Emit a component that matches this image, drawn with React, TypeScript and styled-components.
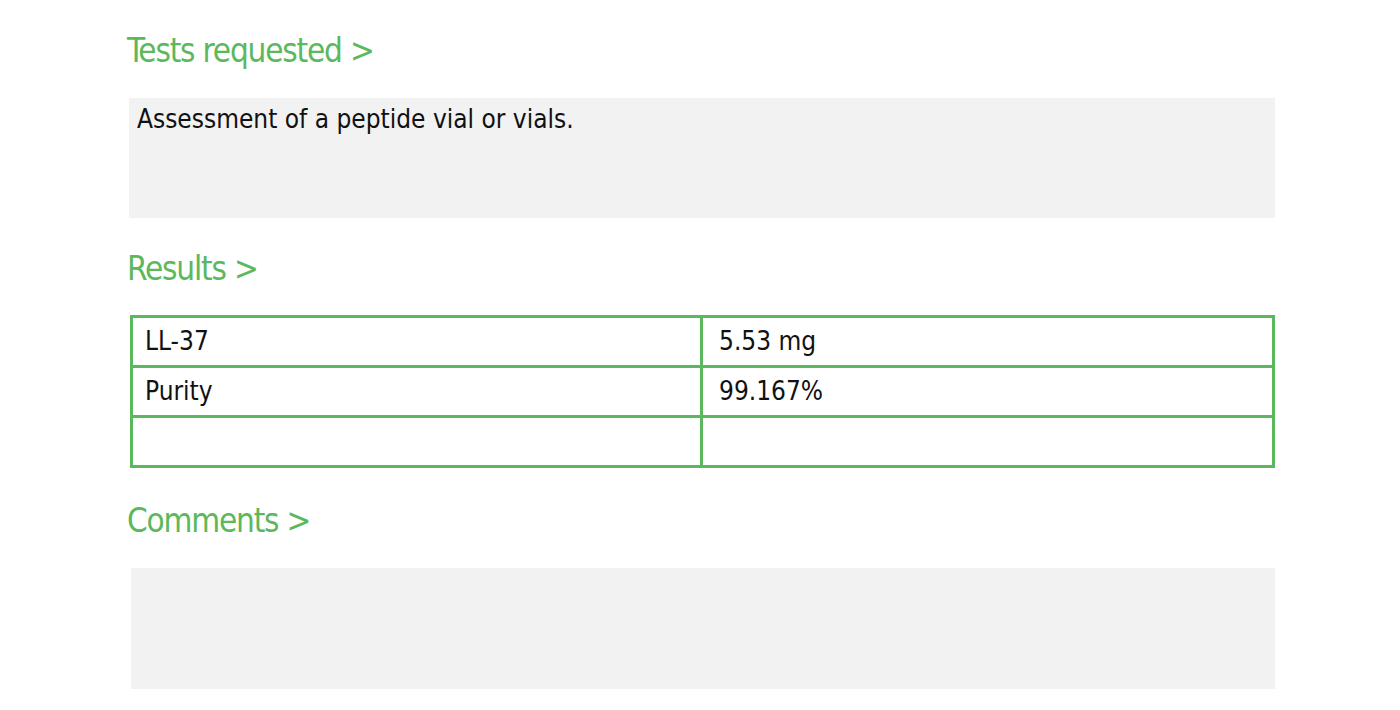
import { createGlobalStyle } from "styled-components";
import styled from "styled-components";

const GlobalStyle = createGlobalStyle`
  html, body {
    margin: 0;
    padding: 0;
    background: #ffffff;
  }
`;

const Page = styled.div`
  width: 1400px;
  height: 710px;
  box-sizing: border-box;
  padding: 30px 125px 0 127px;
  font-family: "DejaVu Sans Condensed", "DejaVu Sans", sans-serif;
  overflow: hidden;
`;

const Heading = styled.h2<{ before?: number; gap: number }>`
  margin: ${({ before = 0 }) => before}px 0 ${({ gap }) => gap}px 0;
  font-family: "DejaVu Sans Condensed", "DejaVu Sans", sans-serif;
  font-weight: normal;
  font-size: 33px;
  line-height: 42px;
  color: #5cb85c;
  letter-spacing: -1.2px;
`;

const TextBox = styled.div<{ shift: number; after: number; tall: number }>`
  margin: 0 0 ${({ after }) => after}px ${({ shift }) => shift}px;
  height: ${({ tall }) => tall}px;
  box-sizing: border-box;
  background: #f2f2f2;
  padding: 5px 8px;
  font-size: 26px;
  line-height: 32px;
  color: #111111;
`;

const Table = styled.table`
  margin: -1px 0 0 3px;
  width: 1145px;
  border-collapse: collapse;
  table-layout: fixed;
  font-size: 26px;
  color: #111111;
`;

const Cell = styled.td<{ indent: number }>`
  border: 3px solid #5cb85c;
  height: 47px;
  padding: 0 0 0 ${({ indent }) => indent}px;
  line-height: 47px;
  vertical-align: middle;
`;

const rows: [string, string][] = [
  ["LL-37", "5.53 mg"],
  ["Purity", "99.167%"],
  ["", ""],
];

export default function App() {
  return (
    <>
      <GlobalStyle />
      <Page>
        <Heading gap={26}>Tests requested &gt;</Heading>
        <TextBox shift={2} after={30} tall={120}>
          Assessment of a peptide vial or vials.
        </TextBox>
        <Heading gap={26}>Results &gt;</Heading>
        <Table>
          <colgroup>
            <col style={{ width: 570 }} />
            <col />
          </colgroup>
          <tbody>
            {rows.map(([name, value], i) => (
              <tr key={i}>
                <Cell indent={12}>{name}</Cell>
                <Cell indent={16}>{value}</Cell>
              </tr>
            ))}
          </tbody>
        </Table>
        <Heading before={32} gap={26}>
          Comments &gt;
        </Heading>
        <TextBox shift={4} after={0} tall={121} />
      </Page>
    </>
  );
}
